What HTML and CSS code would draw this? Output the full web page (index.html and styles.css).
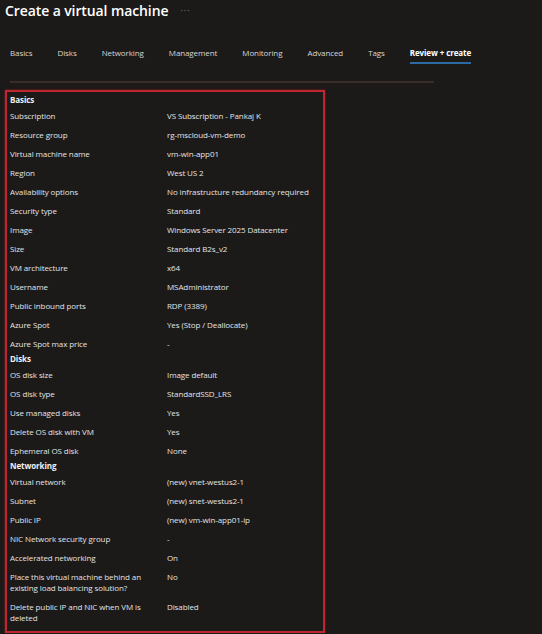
FILE: index.html
```html
<!DOCTYPE html>
<html lang="en">
<head>
    <meta charset="UTF-8">
    <title>Create a virtual machine</title>
    <link rel="stylesheet" href="styles.css">
</head>
<body>
    <div class="page">
        <div class="title-bar">
            <h1>Create a virtual machine</h1>
            <span class="more">&middot;&middot;&middot;</span>
        </div>

        <div class="tabs">
            <span class="tab">Basics</span>
            <span class="tab">Disks</span>
            <span class="tab">Networking</span>
            <span class="tab">Management</span>
            <span class="tab">Monitoring</span>
            <span class="tab">Advanced</span>
            <span class="tab">Tags</span>
            <span class="tab active">Review + create</span>
        </div>
        <div class="divider"></div>

        <div class="summary">
            <div class="section">Basics</div>
            <div class="row"><div class="label">Subscription</div><div class="value">VS Subscription - Pankaj K</div></div>
            <div class="row"><div class="label">Resource group</div><div class="value">rg-mscloud-vm-demo</div></div>
            <div class="row"><div class="label">Virtual machine name</div><div class="value">vm-win-app01</div></div>
            <div class="row"><div class="label">Region</div><div class="value">West US 2</div></div>
            <div class="row"><div class="label">Availability options</div><div class="value">No infrastructure redundancy required</div></div>
            <div class="row"><div class="label">Security type</div><div class="value">Standard</div></div>
            <div class="row"><div class="label">Image</div><div class="value">Windows Server 2025 Datacenter</div></div>
            <div class="row"><div class="label">Size</div><div class="value">Standard B2s_v2</div></div>
            <div class="row"><div class="label">VM architecture</div><div class="value">x64</div></div>
            <div class="row"><div class="label">Username</div><div class="value">MSAdministrator</div></div>
            <div class="row"><div class="label">Public inbound ports</div><div class="value">RDP (3389)</div></div>
            <div class="row"><div class="label">Azure Spot</div><div class="value">Yes (Stop / Deallocate)</div></div>
            <div class="row"><div class="label">Azure Spot max price</div><div class="value">-</div></div>

            <div class="section">Disks</div>
            <div class="row"><div class="label">OS disk size</div><div class="value">Image default</div></div>
            <div class="row"><div class="label">OS disk type</div><div class="value">StandardSSD_LRS</div></div>
            <div class="row"><div class="label">Use managed disks</div><div class="value">Yes</div></div>
            <div class="row"><div class="label">Delete OS disk with VM</div><div class="value">Yes</div></div>
            <div class="row"><div class="label">Ephemeral OS disk</div><div class="value">None</div></div>

            <div class="section">Networking</div>
            <div class="row"><div class="label">Virtual network</div><div class="value">(new) vnet-westus2-1</div></div>
            <div class="row"><div class="label">Subnet</div><div class="value">(new) snet-westus2-1</div></div>
            <div class="row"><div class="label">Public IP</div><div class="value">(new) vm-win-app01-ip</div></div>
            <div class="row"><div class="label">NIC Network security group</div><div class="value">-</div></div>
            <div class="row"><div class="label">Accelerated networking</div><div class="value">On</div></div>
            <div class="row"><div class="label">Place this virtual machine behind an existing load balancing solution?</div><div class="value">No</div></div>
            <div class="row"><div class="label">Delete public IP and NIC when VM is deleted</div><div class="value">Disabled</div></div>
        </div>
    </div>
</body>
</html>
```

FILE: styles.css
```css
* { margin: 0; padding: 0; box-sizing: border-box; }

body {
    background: #1b1a19;
    color: #e6e6e6;
    font-family: 'Open Sans', 'Noto Sans', sans-serif;
    font-size: 8px;
    letter-spacing: -0.1px;
}

.page {
    padding-left: 5px;
}

.title-bar {
    display: flex;
    align-items: center;
    height: 20px;
    gap: 12px;
}

.title-bar h1 {
    font-size: 14px;
    font-weight: 600;
    color: #ffffff;
    letter-spacing: -0.1px;
}

.more {
    color: #8a8886;
    font-size: 9px;
    letter-spacing: 1px;
}

.tabs {
    display: flex;
    gap: 25px;
    margin-top: 26px;
    padding-left: 5px;
    height: 18px;
}

.tab {
    color: #d6d6d6;
    line-height: 14px;
    height: 18px;
}

.tab.active {
    font-weight: 700;
    color: #ffffff;
    border-bottom: 2px solid #2b6aa5;
}

.divider {
    margin: 17px 0 0 5px;
    width: 424px;
    height: 2px;
    background: #3a2d26;
}

.summary {
    margin-top: 7px;
    width: 320px;
    border: 2px solid #c0262f;
    box-shadow: 0 0 2px rgba(200, 30, 40, 0.7);
    padding: 2px 0 4px 3px;
}

.section {
    font-weight: 700;
    color: #f0f0f0;
    line-height: 12px;
}

.row {
    display: flex;
    padding: 4px 0;
    line-height: 11px;
}

.label {
    width: 157px;
    padding-right: 10px;
    color: #e4e4e4;
}

.value {
    color: #e4e4e4;
}
```
